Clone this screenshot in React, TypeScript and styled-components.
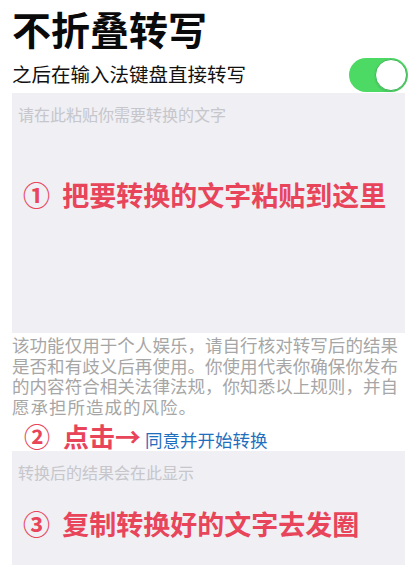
import styled, { createGlobalStyle } from 'styled-components';

const GlobalStyle = createGlobalStyle`
  html, body {
    margin: 0;
    padding: 0;
    background: #fff;
    font-family: "Noto Sans CJK SC", "Noto Sans", sans-serif;
  }
`;

const disclaimerLines = [
  '该功能仅用于个人娱乐，请自行核对转写后的结果',
  '是否和有歧义后再使用。你使用代表你确保你发布',
  '的内容符合相关法律法规，你知悉以上规则，并自',
  '愿承担所造成的风险。',
];

export default function App() {
  return (
    <Page>
      <GlobalStyle />
      <Title>不折叠转写</Title>

      <SettingRow>
        <SettingLabel>之后在输入法键盘直接转写</SettingLabel>
        <Toggle $on>
          <Knob $on />
        </Toggle>
      </SettingRow>

      <TextArea $height={240}>
        <Placeholder>请在此粘贴你需要转换的文字</Placeholder>
        <Annotation $gap={53}>① 把要转换的文字粘贴到这里</Annotation>
      </TextArea>

      <Disclaimer>
        {disclaimerLines.map((line, i) => (
          <DisclaimerLine key={i} $last={i === disclaimerLines.length - 1}>
            {line}
          </DisclaimerLine>
        ))}
      </Disclaimer>

      <StepRow>
        <StepMark>② 点击→</StepMark>
        <AgreeLink type="button">同意并开始转换</AgreeLink>
      </StepRow>

      <TextArea $height={130}>
        <Placeholder>转换后的结果会在此显示</Placeholder>
        <Annotation $gap={24}>③ 复制转换好的文字去发圈</Annotation>
      </TextArea>
    </Page>
  );
}

const Page = styled.div`
  width: 420px;
  height: 565px;
  overflow: hidden;
  box-sizing: border-box;
  padding: 0 15px 0 12px;
`;

const Title = styled.h1`
  margin: 6px 0 0;
  font-size: 39px;
  line-height: 44px;
  font-weight: 700;
  color: #0a0a0a;
`;

const SettingRow = styled.div`
  display: flex;
  align-items: center;
  justify-content: space-between;
  height: 36px;
  margin-top: 7px;
`;

const SettingLabel = styled.span`
  font-size: 19.5px;
  line-height: 24px;
  color: #111;
  margin-top: -3px;
`;

const Toggle = styled.div<{ $on?: boolean }>`
  width: 59px;
  height: 34px;
  border-radius: 17px;
  margin-right: -3px;
  box-sizing: border-box;
  padding: 1px;
  display: flex;
  justify-content: ${(p) => (p.$on ? 'flex-end' : 'flex-start')};
  align-items: center;
  background: ${(p) => (p.$on ? '#4cd964' : '#e5e5ea')};
`;

const Knob = styled.div<{ $on?: boolean }>`
  width: 32px;
  height: 32px;
  border-radius: 50%;
  background: #fff;
  box-sizing: border-box;
  border: 1px solid ${(p) => (p.$on ? '#3fb757' : '#d0d0d5')};
  box-shadow: 0 1px 2px rgba(0, 0, 0, 0.12);
`;

const TextArea = styled.div<{ $height: number }>`
  height: ${(p) => p.$height}px;
  flex-shrink: 0;
  background: #efeff4;
  box-sizing: border-box;
  padding: 10px 6px;
  display: flex;
  flex-direction: column;
`;

const Placeholder = styled.div`
  font-size: 16px;
  line-height: 22px;
  color: #c6c6cb;
`;

const Annotation = styled.div<{ $gap: number }>`
  margin-top: ${(p) => p.$gap}px;
  padding-left: 5px;
  font-size: 27px;
  line-height: 34px;
  font-weight: 700;
  word-spacing: 6px;
  color: #e8445a;
  white-space: nowrap;
`;

const Disclaimer = styled.div`
  width: 386px;
  margin-top: 2px;
  font-size: 17.5px;
  line-height: 20.5px;
  color: #a6a6a6;
`;

const DisclaimerLine = styled.div<{ $last?: boolean }>`
  text-align: justify;
  text-align-last: ${(p) => (p.$last ? 'left' : 'justify')};
  letter-spacing: ${(p) => (p.$last ? '1px' : '0')};
  white-space: nowrap;
`;

const StepRow = styled.div`
  display: flex;
  align-items: baseline;
  height: 30px;
  margin-top: 4px;
  padding-left: 12px;
`;

const StepMark = styled.span`
  font-size: 26px;
  line-height: 30px;
  font-weight: 700;
  word-spacing: 7px;
  color: #e8445a;
  white-space: nowrap;
`;

const AgreeLink = styled.button`
  margin-left: 4px;
  padding: 0;
  border: none;
  background: none;
  font-family: inherit;
  font-size: 17.5px;
  line-height: 30px;
  color: #1f6fbe;
  cursor: pointer;
`;
